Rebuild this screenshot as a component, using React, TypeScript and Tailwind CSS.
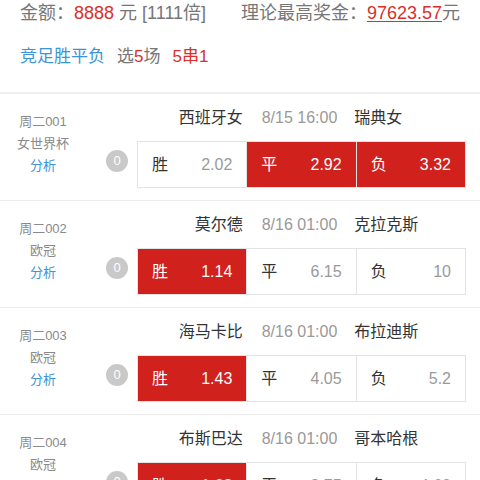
import React from "react";

type Match = {
  no: string;
  league: string;
  home: string;
  time: string;
  away: string;
  odds: string[];
  picked: number[];
};

const matches: Match[] = [
  { no: "周二001", league: "女世界杯", home: "西班牙女", time: "8/15 16:00", away: "瑞典女", odds: ["2.02", "2.92", "3.32"], picked: [1, 2] },
  { no: "周二002", league: "欧冠", home: "莫尔德", time: "8/16 01:00", away: "克拉克斯", odds: ["1.14", "6.15", "10"], picked: [0] },
  { no: "周二003", league: "欧冠", home: "海马卡比", time: "8/16 01:00", away: "布拉迪斯", odds: ["1.43", "4.05", "5.2"], picked: [0] },
  { no: "周二004", league: "欧冠", home: "布斯巴达", time: "8/16 01:00", away: "哥本哈根", odds: ["1.62", "3.75", "4.60"], picked: [0] },
];

const labels = ["胜", "平", "负"];

const MatchRow = ({ m }: { m: Match }) => (
  <div className="flex h-[107px] border-b border-[#ececec]">
    {/* left info column */}
    <div className="w-[86px] shrink-0 flex flex-col items-center pt-[17px] text-[13px] leading-[22px]">
      <span className="text-[#8a8a8a]">{m.no}</span>
      <span className="text-[#8a8a8a]">{m.league}</span>
      <span className="text-[#3d93d8]">分析</span>
    </div>

    <div className="flex flex-col pt-[13px]">
      <div className="ml-[51px] w-[329px] grid grid-cols-3 h-[22px] items-center text-[16px] leading-[22px]">
        <span className="text-right pr-[4px] text-[#333]">{m.home}</span>
        <span className="text-center pr-[4px] text-[#999]">{m.time}</span>
        <span className="pl-0 -ml-[2px] text-[#333]">{m.away}</span>
      </div>

      <div className="mt-[12px] flex items-center">
        <div className="w-[51px] pl-[20px] -mt-[8px]">
          <div className="size-[22px] rounded-full bg-[#c9c9c9] text-white text-[13px] flex items-center justify-center">
            0
          </div>
        </div>
        <div className="w-[329px] h-[47px] grid grid-cols-3 gap-px p-px bg-[#e3e3e3]">
          {m.odds.map((o, i) => {
            const on = m.picked.includes(i);
            return (
              <div
                key={i}
                className={
                  on
                    ? "flex items-center justify-between px-[14px] bg-[#d0211c] text-white text-[16px]"
                    : "flex items-center justify-between px-[14px] bg-white text-[16px]"
                }
              >
                <span className={on ? "text-white" : "text-[#333]"}>{labels[i]}</span>
                <span className={on ? "text-white" : "text-[#9a9a9a]"}>{o}</span>
              </div>
            );
          })}
        </div>
      </div>
    </div>
  </div>
);

export default function App() {
  return (
    <div
      className="w-[480px] h-[480px] overflow-hidden bg-white"
      style={{ fontFamily: '"Liberation Sans", "Noto Sans CJK SC", sans-serif' }}
    >
      <div className="h-[26px] flex items-center px-[20px] text-[18px] text-[#777]">
        <div className="w-[223px] whitespace-nowrap">
          金额：<span className="text-[#d8302a]">8888</span> 元 [1111倍]
        </div>
        <div className="whitespace-nowrap">
          理论最高奖金：
          <span className="text-[#d8302a] underline underline-offset-2 decoration-1">97623.57</span>元
        </div>
      </div>

      <div className="mt-[20px] h-[22px] flex items-center px-[20px] text-[17px] whitespace-nowrap">
        <span className="text-[#3d93d8] mr-[12px]">竞足胜平负</span>
        <span className="text-[#777] mr-[12px]">
          选<span className="text-[#d8302a]">5</span>场
        </span>
        <span className="text-[#d8302a]">5串1</span>
      </div>

      <div className="mt-[24px] h-[2px] bg-[#f0f0f0]" />

      {matches.map((m) => (
        <MatchRow key={m.no} m={m} />
      ))}
    </div>
  );
}
